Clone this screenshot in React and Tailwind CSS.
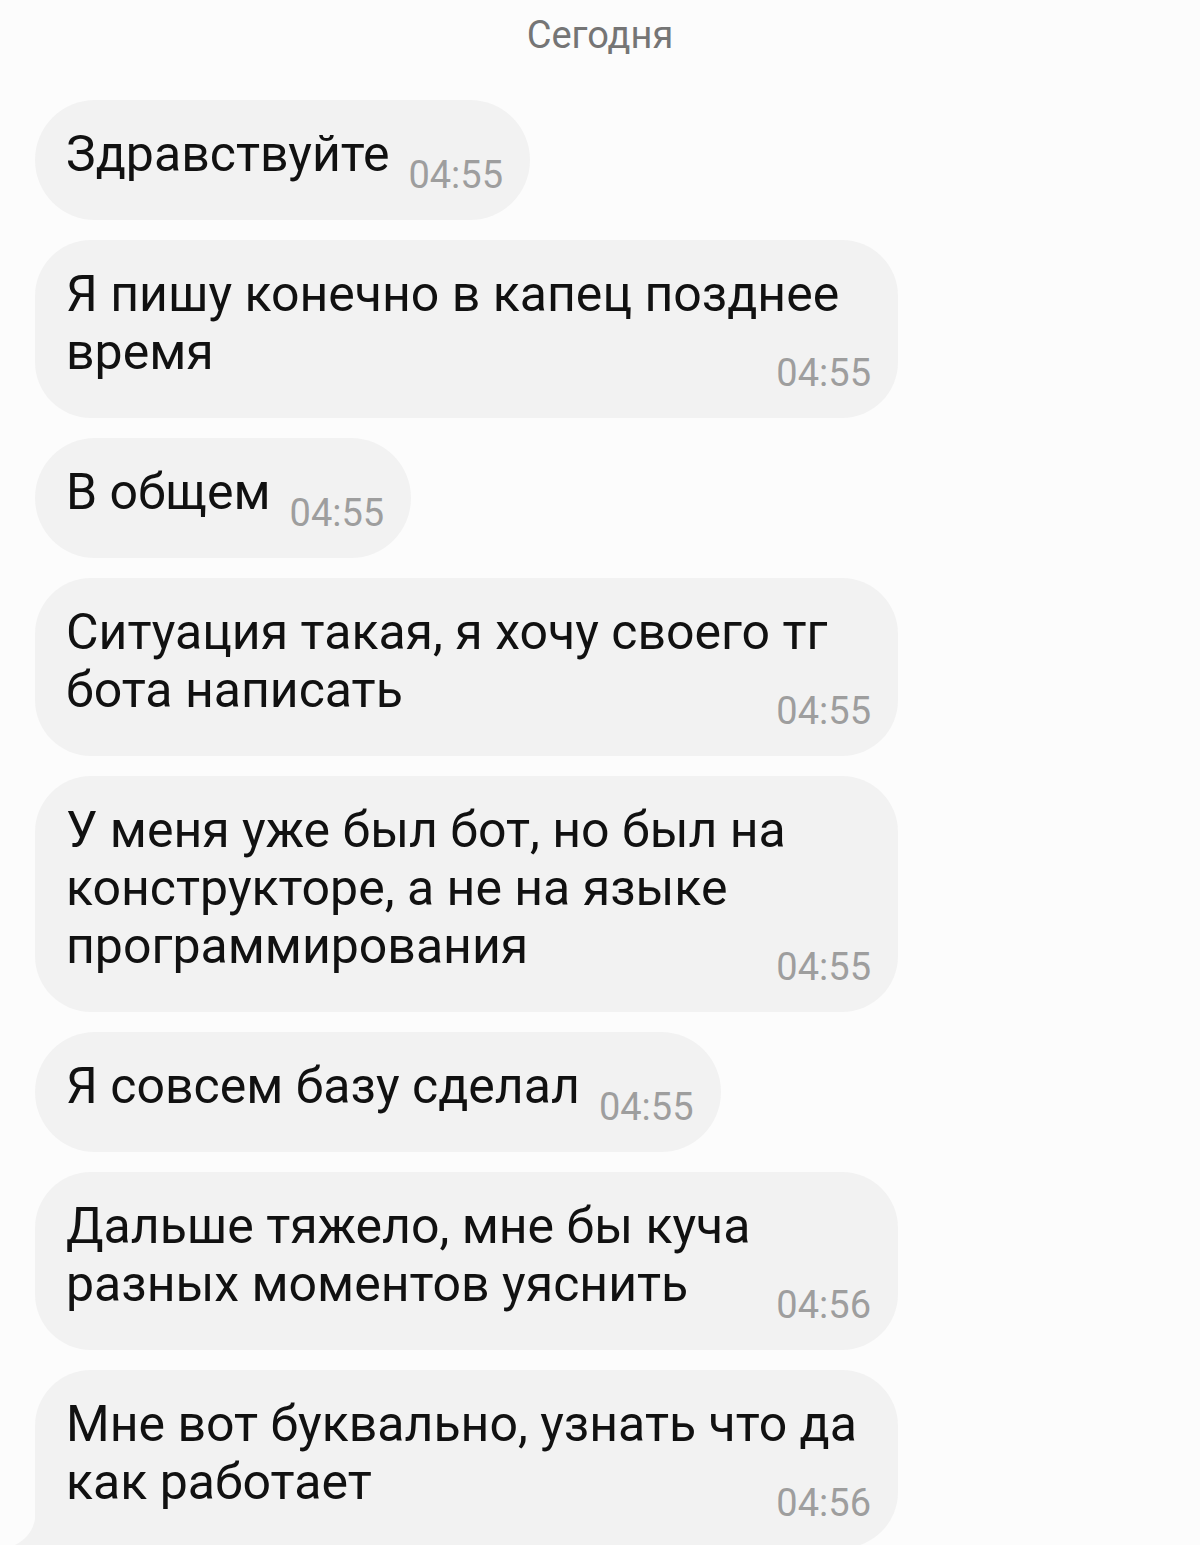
import React from "react";

const msgs = [
  { lines: ["Здравствуйте"], time: "04:55" },
  { lines: ["Я пишу конечно в капец позднее", "время"], time: "04:55" },
  { lines: ["В общем"], time: "04:55" },
  { lines: ["Ситуация такая, я хочу своего тг", "бота написать"], time: "04:55" },
  { lines: ["У меня уже был бот, но был на", "конструкторе, а не на языке", "программирования"], time: "04:55" },
  { lines: ["Я совсем базу сделал"], time: "04:55" },
  { lines: ["Дальше тяжело, мне бы куча", "разных моментов уяснить"], time: "04:56" },
  { lines: ["Мне вот буквально, узнать что да", "как работает"], time: "04:56", tail: true },
];

function Bubble({ m }) {
  const multi = m.lines.length > 1;
  return (
    <div className="relative self-start">
      <div
        className={
          "relative flex items-end bg-[#f2f2f2] pt-[25px] pb-[37px] pl-[31px] pr-[27px] " +
          (multi ? "w-[863px] justify-between rounded-[56px] " : "rounded-[60px] ") +
          (m.tail ? "rounded-bl-none" : "")
        }
      >
        <div className={"text-[50px] leading-[58px] text-[#111111] " + (multi ? "min-w-0 flex-1" : "")}>
          {m.lines.map((l, i) => (
            <div key={i} className="whitespace-nowrap">{l}</div>
          ))}
        </div>
        <span className="ml-[19px] shrink-0 translate-y-[12px] text-[38px] leading-[40px] text-[#9e9e9e] whitespace-nowrap">
          {m.time}
        </span>
      </div>
      {m.tail && (
        <svg className="absolute left-[-27px] bottom-0" width="28" height="40" viewBox="0 0 28 40">
          <path d="M28 0 C28 18 22 32 0 40 L28 40 Z" fill="#f2f2f2" />
        </svg>
      )}
    </div>
  );
}

export default function App() {
  return (
    <div
      className="h-[1545px] w-[1200px] overflow-hidden bg-[#fcfcfc]"
      style={{ fontFamily: "Roboto, 'Noto Sans', sans-serif" }}
    >
      <div className="pt-[15px] text-center text-[38px] leading-[40px] text-[#757575]">Сегодня</div>
      <div className="mt-[45px] flex flex-col gap-[20px] pl-[35px]">
        {msgs.map((m, i) => (
          <Bubble key={i} m={m} />
        ))}
      </div>
    </div>
  );
}
